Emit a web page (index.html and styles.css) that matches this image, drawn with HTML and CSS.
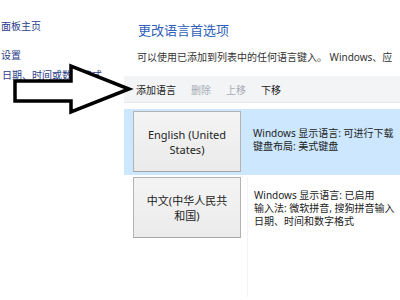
FILE: index.html
```html
<!DOCTYPE html>
<html lang="zh-CN">
<head>
<meta charset="utf-8">
<link rel="stylesheet" href="styles.css">
</head>
<body>
<div class="window">
  <nav class="sidebar">
    <a class="side-link home">面板主页</a>
    <a class="side-link settings">设置</a>
    <a class="side-link date">日期、时间或数字格式</a>
  </nav>
  <main class="main">
    <h1 class="title">更改语言首选项</h1>
    <p class="desc">可以使用已添加到列表中的任何语言键入。 Windows、应</p>
    <div class="toolbar">
      <span class="tool">添加语言</span>
      <span class="tool disabled">删除</span>
      <span class="tool disabled">上移</span>
      <span class="tool">下移</span>
    </div>
    <div class="list">
      <div class="row selected">
        <div class="lang-btn">English (United<br>States)</div>
        <div class="details first">
          <div>Windows 显示语言: 可进行下载</div>
          <div>键盘布局: 美式键盘</div>
        </div>
      </div>
      <div class="row last">
        <div class="lang-btn">中文(中华人民共<br>和国)</div>
        <div class="details">
          <div>Windows 显示语言: 已启用</div>
          <div>输入法: 微软拼音, 搜狗拼音输入</div>
          <div>日期、时间和数字格式</div>
        </div>
      </div>
    </div>
  </main>
  <svg class="arrow" width="140" height="60" viewBox="0 0 140 60">
    <polygon points="15,19 71,19 71,4 129,27 71,50 71,39 15,39" fill="#fff" stroke="#000" stroke-width="3.5" stroke-linejoin="miter"/>
  </svg>
</div>
</body>
</html>
```
FILE: styles.css
```css
html, body {
  margin: 0;
  padding: 0;
  background: #fff;
}
body {
  width: 400px;
  height: 300px;
  overflow: hidden;
  font-family: "Noto Sans", "Noto Sans CJK SC", sans-serif;
}
.window {
  position: relative;
  display: flex;
  width: 400px;
  height: 300px;
}
.sidebar {
  width: 124px;
  flex: none;
  display: flex;
  flex-direction: column;
}
.side-link {
  display: block;
  white-space: nowrap;
  font-size: 10px;
  line-height: 12px;
  color: #2a3d8a;
  margin-left: 1px;
}
.side-link.home {
  margin-top: 20px;
}
.side-link.settings {
  margin-top: 17px;
}
.side-link.date {
  margin-top: 8px;
  margin-left: 2px;
}
.main {
  flex: 1;
  min-width: 0;
  display: flex;
  flex-direction: column;
  overflow: hidden;
}
.title {
  margin: 21px 0 0 14px;
  font-size: 13px;
  line-height: 18px;
  font-weight: normal;
  color: #2f5fb8;
  white-space: nowrap;
}
.desc {
  margin: 11px 0 0 13px;
  font-size: 10px;
  line-height: 14px;
  color: #333;
  white-space: nowrap;
}
.toolbar {
  margin-top: 12px;
  height: 26px;
  display: flex;
  align-items: center;
  gap: 15px;
  padding-left: 12px;
  background: #f3f4f6;
  border-bottom: 1px solid #e6e7ea;
  font-size: 10px;
  color: #1a1a1a;
  white-space: nowrap;
}
.tool.disabled {
  color: #a7acb5;
}
.list {
  margin-top: 6px;
  flex: 1;
  display: flex;
  flex-direction: column;
}
.row {
  display: flex;
  padding: 2px 0 3px 9px;
  height: 61px;
}
.row.selected {
  background: #cce7fe;
}
.row.last {
  flex: 1;
  height: auto;
}
.lang-btn {
  flex: none;
  width: 106px;
  height: 59px;
  border: 1px solid #b3b3b3;
  border-bottom-color: #a4a4a4;
  background: linear-gradient(#f4f4f4, #ebebeb);
  display: flex;
  align-items: center;
  justify-content: center;
  text-align: center;
  font-size: 11px;
  line-height: 15px;
  color: #222;
}
.details {
  margin-left: 6px;
  padding-left: 6px;
  font-size: 10px;
  line-height: 13px;
  color: #222;
  white-space: nowrap;
}
.details.first {
  padding-top: 16px;
}
.row.last .details {
  border-left: 1px solid #f2f2fa;
  padding-top: 12px;
}
.arrow {
  position: absolute;
  left: 0;
  top: 62px;
}
```
